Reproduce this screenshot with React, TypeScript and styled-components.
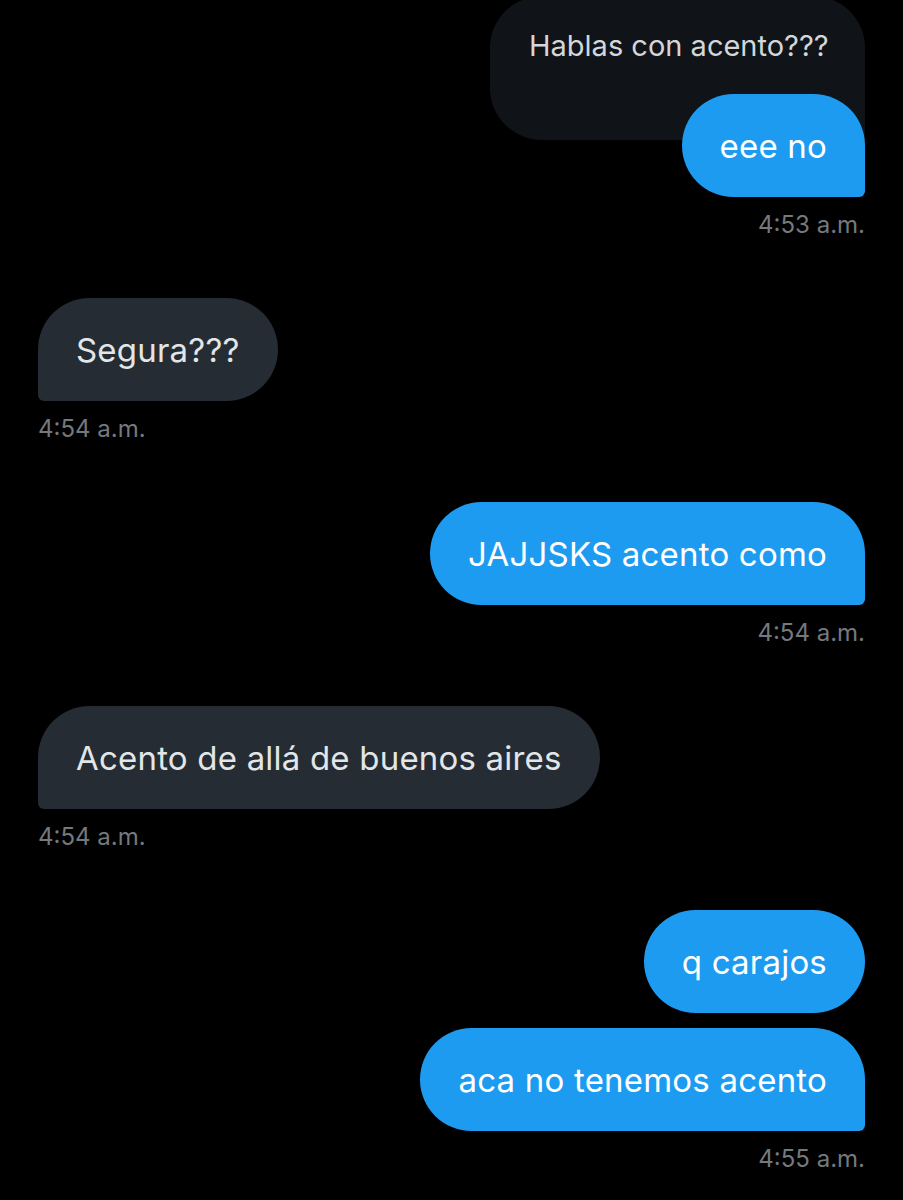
import React from "react";
import styled, { createGlobalStyle } from "styled-components";

const Global = createGlobalStyle`
  html, body { margin: 0; padding: 0; background: #000; }
  body { font-family: Inter, Roboto, "Noto Sans", sans-serif; }
`;

const Page = styled.div`
  width: 903px;
  height: 1200px;
  overflow: hidden;
  background: #000;
  padding: 0 38px;
  box-sizing: border-box;
  display: flex;
  flex-direction: column;
`;

const Group = styled.div<{ $side: "in" | "out" }>`
  display: flex;
  flex-direction: column;
  align-items: ${(p) => (p.$side === "out" ? "flex-end" : "flex-start")};
  gap: 15px;
  margin-bottom: 59px;
`;

const Quote = styled.div`
  margin-top: -4px;
  width: 375px;
  height: 144px;
  box-sizing: border-box;
  padding: 30px 39px 0;
  background: #101418;
  border-radius: 52px 52px 0 52px;
  color: #d3d7da;
  font-size: 29px;
  line-height: 40px;
  white-space: nowrap;
  text-align: right;
`;

const QuoteStack = styled.div`
  display: flex;
  flex-direction: column;
  align-items: flex-end;
  & > :last-child {
    margin-top: -46px;
  }
`;

const Bubble = styled.div<{ $side: "in" | "out"; $tail: boolean }>`
  height: 103px;
  box-sizing: border-box;
  padding: 0 38px;
  display: flex;
  align-items: center;
  font-size: 33px;
  letter-spacing: 0.2px;
  white-space: nowrap;
  color: ${(p) => (p.$side === "out" ? "#ffffff" : "#e3e6e8")};
  background: ${(p) => (p.$side === "out" ? "#1d9bf0" : "#252c33")};
  border-radius: ${(p) =>
    !p.$tail
      ? "52px"
      : p.$side === "out"
      ? "52px 52px 6px 52px"
      : "52px 52px 52px 6px"};
`;

const Time = styled.div`
  margin-top: -1px;
  font-size: 24px;
  line-height: 28px;
  color: #74797e;
`;

type Msg = { side: "in" | "out"; texts: string[]; time: string; quote?: string };

const messages: Msg[] = [
  { side: "out", quote: "Hablas con acento???", texts: ["eee no"], time: "4:53 a.m." },
  { side: "in", texts: ["Segura???"], time: "4:54 a.m." },
  { side: "out", texts: ["JAJJSKS acento como"], time: "4:54 a.m." },
  { side: "in", texts: ["Acento de allá de buenos aires"], time: "4:54 a.m." },
  { side: "out", texts: ["q carajos", "aca no tenemos acento"], time: "4:55 a.m." },
];

export default function App() {
  return (
    <>
      <Global />
      <Page>
        {messages.map((m, i) => (
          <Group key={i} $side={m.side}>
            {m.quote ? (
              <QuoteStack>
                <Quote>{m.quote}</Quote>
                <Bubble $side={m.side} $tail>
                  {m.texts[0]}
                </Bubble>
              </QuoteStack>
            ) : (
              m.texts.map((t, j) => (
                <Bubble key={j} $side={m.side} $tail={j === m.texts.length - 1}>
                  {t}
                </Bubble>
              ))
            )}
            <Time>{m.time}</Time>
          </Group>
        ))}
      </Page>
    </>
  );
}
